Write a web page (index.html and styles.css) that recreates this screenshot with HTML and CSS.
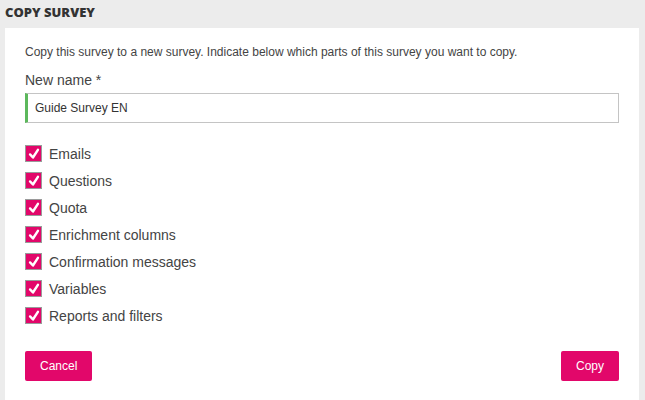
FILE: index.html
```html
<!DOCTYPE html>
<html>
<head>
<meta charset="utf-8">
<link rel="stylesheet" href="styles.css">
</head>
<body>
<div class="page">
  <h1 class="title">COPY SURVEY</h1>
  <div class="panel">
    <p class="intro">Copy this survey to a new survey. Indicate below which parts of this survey you want to copy.</p>
    <label class="field-label">New name *</label>
    <div class="input">Guide Survey EN</div>
    <ul class="checks">
      <li><span class="box"><svg viewBox="0 0 16 16" width="16" height="16"><path d="M3.5 8.5 L6.8 12 L12.5 3.2" fill="none" stroke="#fff" stroke-width="2.8" stroke-linecap="round" stroke-linejoin="round"/></svg></span>Emails</li>
      <li><span class="box"><svg viewBox="0 0 16 16" width="16" height="16"><path d="M3.5 8.5 L6.8 12 L12.5 3.2" fill="none" stroke="#fff" stroke-width="2.8" stroke-linecap="round" stroke-linejoin="round"/></svg></span>Questions</li>
      <li><span class="box"><svg viewBox="0 0 16 16" width="16" height="16"><path d="M3.5 8.5 L6.8 12 L12.5 3.2" fill="none" stroke="#fff" stroke-width="2.8" stroke-linecap="round" stroke-linejoin="round"/></svg></span>Quota</li>
      <li><span class="box"><svg viewBox="0 0 16 16" width="16" height="16"><path d="M3.5 8.5 L6.8 12 L12.5 3.2" fill="none" stroke="#fff" stroke-width="2.8" stroke-linecap="round" stroke-linejoin="round"/></svg></span>Enrichment columns</li>
      <li><span class="box"><svg viewBox="0 0 16 16" width="16" height="16"><path d="M3.5 8.5 L6.8 12 L12.5 3.2" fill="none" stroke="#fff" stroke-width="2.8" stroke-linecap="round" stroke-linejoin="round"/></svg></span>Confirmation messages</li>
      <li><span class="box"><svg viewBox="0 0 16 16" width="16" height="16"><path d="M3.5 8.5 L6.8 12 L12.5 3.2" fill="none" stroke="#fff" stroke-width="2.8" stroke-linecap="round" stroke-linejoin="round"/></svg></span>Variables</li>
      <li><span class="box"><svg viewBox="0 0 16 16" width="16" height="16"><path d="M3.5 8.5 L6.8 12 L12.5 3.2" fill="none" stroke="#fff" stroke-width="2.8" stroke-linecap="round" stroke-linejoin="round"/></svg></span>Reports and filters</li>
    </ul>
    <div class="actions">
      <button class="btn">Cancel</button>
      <button class="btn">Copy</button>
    </div>
  </div>
</div>
</body>
</html>
```
FILE: styles.css
```css
html, body {
  margin: 0;
  padding: 0;
  background: #ececec;
  font-family: "Liberation Sans", Arial, sans-serif;
  color: #444;
}
.page {
  width: 645px;
  height: 400px;
  display: flex;
  flex-direction: column;
}
.title {
  margin: 0;
  padding: 4px 0 0 5px;
  height: 24px;
  box-sizing: border-box;
  font-family: "Open Sans", sans-serif;
  font-weight: 800;
  font-size: 13px;
  line-height: 16px;
  color: #333;
  letter-spacing: 0;
}
.panel {
  margin: 4px 6px 0 5px;
  background: #fff;
  flex: 1;
  padding: 17px 20px 0 20px;
  display: flex;
  flex-direction: column;
}
.intro {
  margin: 0;
  font-size: 12px;
  line-height: 14px;
  color: #444;
}
.field-label {
  display: block;
  margin-top: 13px;
  font-size: 14px;
  line-height: 16px;
  color: #444;
}
.input {
  margin-top: 5px;
  height: 30px;
  box-sizing: border-box;
  border: 1px solid #c4c4c4;
  border-left: 3px solid #5cb85c;
  padding: 0 0 0 7px;
  font-size: 12px;
  line-height: 28px;
  color: #333;
}
.checks {
  list-style: none;
  margin: 17px 0 0 0;
  padding: 0;
}
.checks li {
  display: flex;
  align-items: center;
  height: 27px;
  font-size: 14px;
  color: #444;
}
.box {
  width: 17px;
  height: 17px;
  box-sizing: border-box;
  border: 1px solid #9a9a9a;
  background: #e2076a;
  margin-right: 7px;
  display: flex;
  align-items: center;
  justify-content: center;
}
.box svg {
  width: 14px;
  height: 14px;
}
.actions {
  margin-top: 22px;
  display: flex;
  justify-content: space-between;
}
.btn {
  height: 30px;
  box-sizing: border-box;
  border: none;
  border-radius: 2px;
  background: #e2076a;
  color: #fff;
  font-family: "Liberation Sans", Arial, sans-serif;
  font-size: 12px;
  padding: 0 15px;
  min-width: 57px;
}
```
